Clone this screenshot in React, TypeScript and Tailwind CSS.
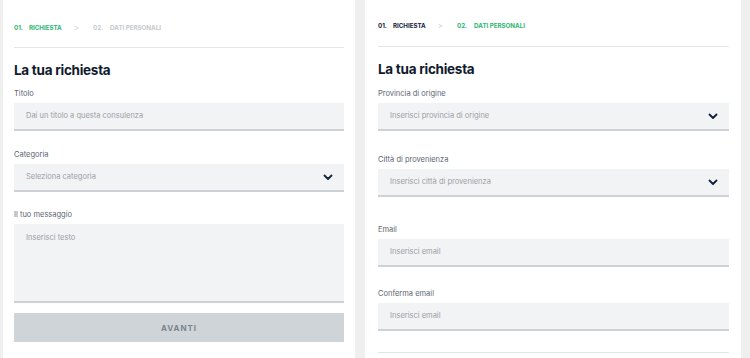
import React from "react";

const font = { fontFamily: "Inter, 'Noto Sans', sans-serif" };

function Chevron() {
  return (
    <svg width="10" height="7" viewBox="0 0 10 7" className="shrink-0">
      <path d="M1.5 1.5 L5 5 L8.5 1.5" fill="none" stroke="#13213a" strokeWidth="1.8" strokeLinecap="round" strokeLinejoin="round" />
    </svg>
  );
}

function Steps({ active }: { active: 1 | 2 }) {
  const on = "text-[#2bb673]";
  const done = "text-[#13213a]";
  const off = "text-[#c5c9cd]";
  return (
    <div className="flex items-center h-[12px] text-[6.2px] font-bold uppercase">
      <span className={active === 1 ? on : done}>01.</span>
      <span className={`ml-[6px] ${active === 1 ? on : done}`}>Richiesta</span>
      <span className="ml-[12px] text-[#c9cdd1] text-[8px] font-normal">&gt;</span>
      <span className={`ml-[14px] ${active === 2 ? on : off}`}>02.</span>
      <span className={`ml-[7px] ${active === 2 ? on : off}`}>Dati personali</span>
    </div>
  );
}

function Label({ children }: { children: React.ReactNode }) {
  return <div className="text-[7.5px] leading-[10px] text-[#5d6572]">{children}</div>;
}

function Field({ placeholder, select, h = 28 }: { placeholder: string; select?: boolean; h?: number }) {
  return (
    <div
      className="bg-[#f2f3f4] border-b-2 border-[#cdd1d6] flex items-center justify-between pl-[12px] pr-[11px]"
      style={{ height: h }}
    >
      <span className="text-[7.5px] leading-[10px] text-[#9aa0a7]">{placeholder}</span>
      {select && <Chevron />}
    </div>
  );
}

export default function App() {
  return (
    <div className="w-[750px] h-[358px] bg-[#efeff0] flex overflow-hidden" style={font}>
      {/* left panel */}
      <div className="ml-[3px] w-[352px] h-full bg-white px-[11px] flex flex-col">
        <div className="pt-[22px]">
          <Steps active={1} />
        </div>
        <div className="mt-[13px] h-px bg-[#e4e6e8]" />
        <div className="mt-[14px] text-[13.5px] leading-[16px] font-bold text-[#101a2c] tracking-[-0.02em]">La tua richiesta</div>
        <div className="mt-[11px]"><Label>Titolo</Label></div>
        <div className="mt-[4px]"><Field placeholder="Dai un titolo a questa consulenza" /></div>
        <div className="mt-[19px]"><Label>Categoria</Label></div>
        <div className="mt-[4px]"><Field placeholder="Seleziona categoria" select /></div>
        <div className="mt-[18px]"><Label>Il tuo messaggio</Label></div>
        <div className="mt-[4px] bg-[#f2f3f4] border-b-2 border-[#cdd1d6] h-[79px] pl-[12px] pt-[9px]">
          <div className="text-[7.5px] leading-[10px] text-[#9aa0a7]">Inserisci testo</div>
        </div>
        <div className="mt-[10px] h-[29px] bg-[#cfd4d8] flex items-center justify-center text-[8px] font-bold tracking-[0.12em] text-[#7b8590]">
          AVANTI
        </div>
      </div>
      {/* right panel */}
      <div className="ml-[10px] w-[376px] h-full bg-white pl-[13px] pr-[12px] flex flex-col">
        <div className="pt-[20px]">
          <Steps active={2} />
        </div>
        <div className="mt-[14px] h-px bg-[#e4e6e8]" />
        <div className="mt-[14px] text-[13.5px] leading-[16px] font-bold text-[#101a2c] tracking-[-0.02em]">La tua richiesta</div>
        <div className="mt-[12px]"><Label>Provincia di origine</Label></div>
        <div className="mt-[4px]"><Field placeholder="Inserisci provincia di origine" select /></div>
        <div className="mt-[24px]"><Label>Città di provenienza</Label></div>
        <div className="mt-[4px]"><Field placeholder="Inserisci città di provenienza" select /></div>
        <div className="mt-[28px]"><Label>Email</Label></div>
        <div className="mt-[4px]"><Field placeholder="Inserisci email" /></div>
        <div className="mt-[22px]"><Label>Conferma email</Label></div>
        <div className="mt-[4px]"><Field placeholder="Inserisci email" /></div>
        <div className="mt-[21px] h-px bg-[#e4e6e8]" />
      </div>
    </div>
  );
}
